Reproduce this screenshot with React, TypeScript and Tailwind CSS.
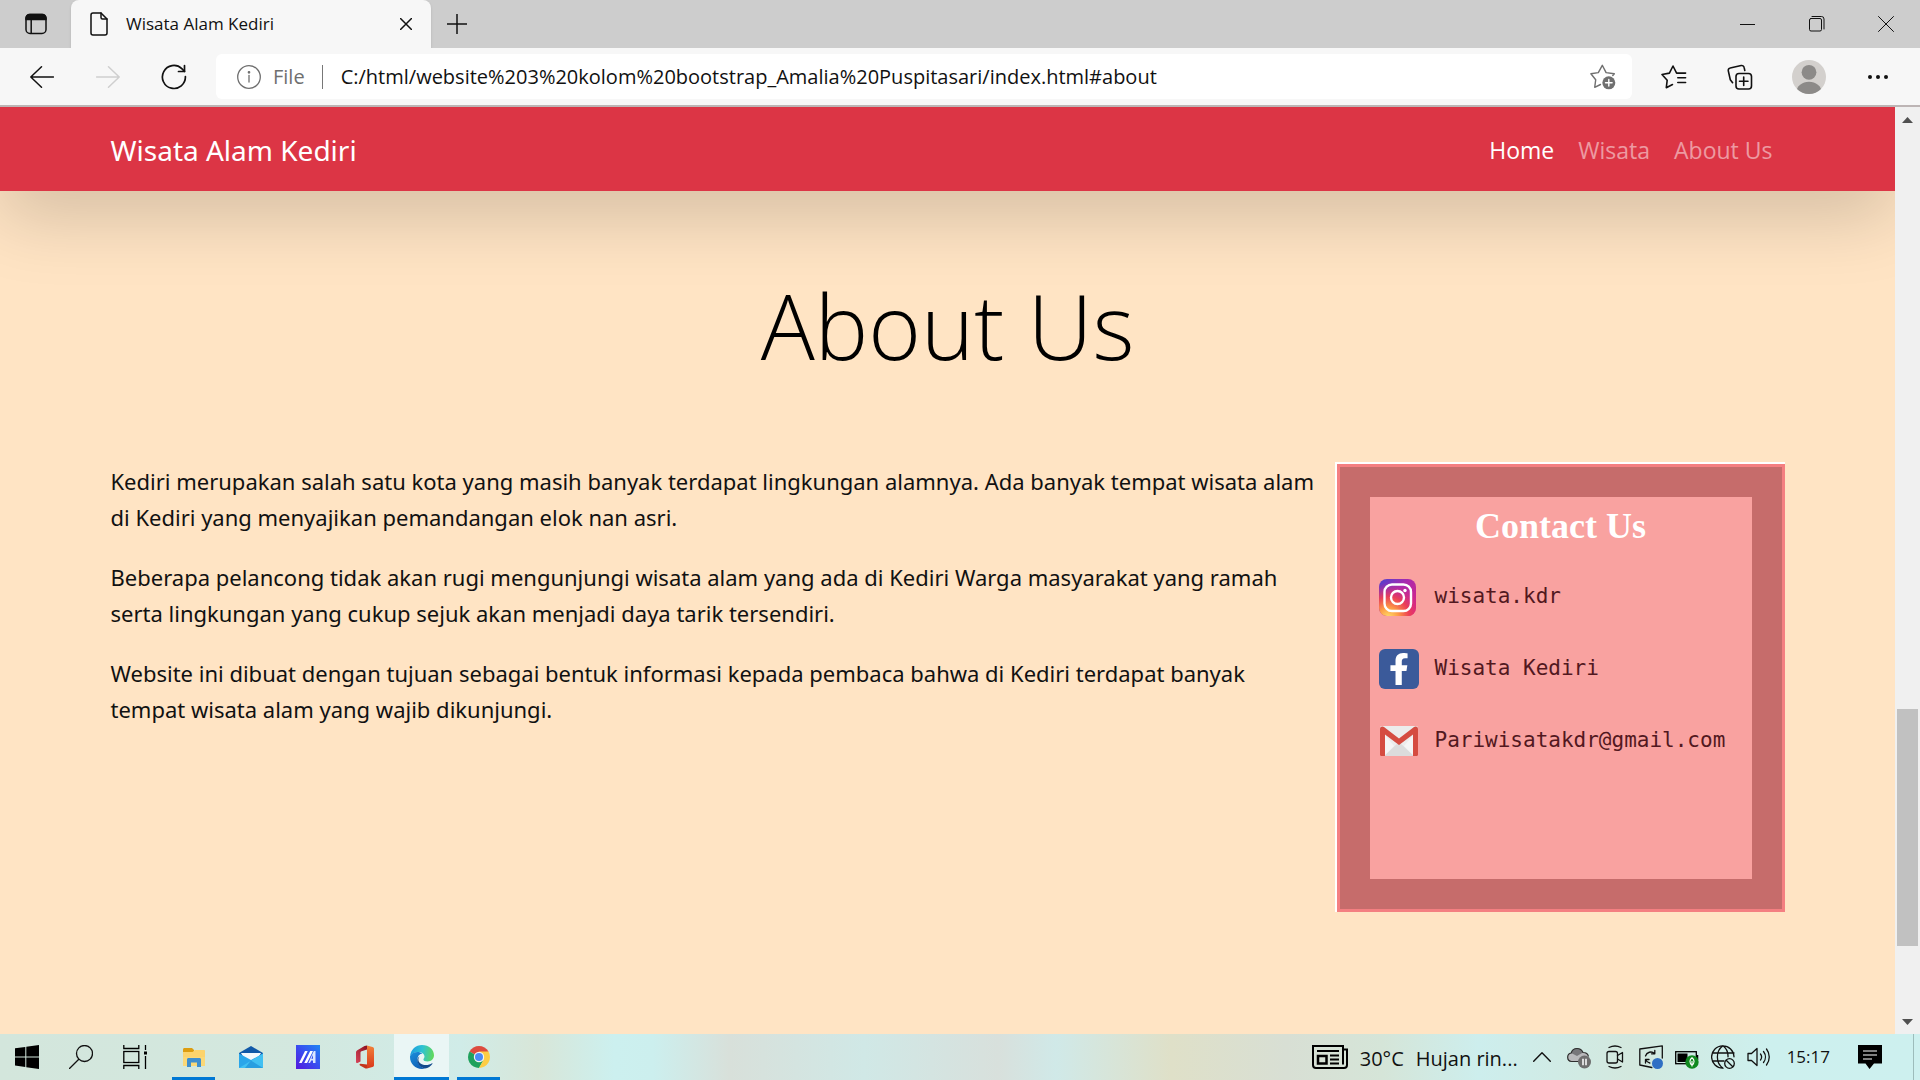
import React from "react";
import { FaFacebookF } from "react-icons/fa";

type Icon = { className?: string };

const line = {
  fill: "none",
  stroke: "currentColor",
  strokeLinecap: "round" as const,
  strokeLinejoin: "round" as const,
};

/* ---------- browser icons ---------- */

const TabActionsIcon = () => (
  <svg viewBox="0 0 24 24" className="size-6" {...line} strokeWidth="1.5">
    <rect x="2" y="2.5" width="20" height="19" rx="4" />
    <path d="M2 7.5V6a3.5 3.5 0 0 1 3.5-3.5h13A3.5 3.5 0 0 1 22 6v1.500Z" fill="currentColor" />
    <path d="M7.200 8v13" />
  </svg>
);

const PageIcon = () => (
  <svg viewBox="0 0 18 24" className="h-6 w-[18px] shrink-0" {...line} strokeWidth="1.5">
    <path d="M3 1h8l6 6v14a2 2 0 0 1-2 2H3a2 2 0 0 1-2-2V3a2 2 0 0 1 2-2Z" />
    <path d="M11 1v4.500A1.500 1.500 0 0 0 12.500 7H17" />
  </svg>
);

const CloseIcon = () => (
  <svg viewBox="0 0 12 12" className="size-3" {...line} strokeWidth="1.5">
    <path d="M.5.5l11 11M11.500.5l-11 11" />
  </svg>
);

const PlusIcon = () => (
  <svg viewBox="0 0 20 20" className="size-5" {...line} strokeWidth="1.500">
    <path d="M10 0v20M0 10h20" />
  </svg>
);

const MinimizeIcon = () => (
  <svg viewBox="0 0 15 15" className="size-[15px]" {...line} shapeRendering="crispEdges">
    <path d="M0 7.500h15" />
  </svg>
);

const RestoreIcon = () => (
  <svg viewBox="0 0 16 16" className="size-4" {...line}>
    <rect x=".5" y="2.500" width="12" height="12.500" rx="1.500" />
    <path d="M3 .5h9.500A2.500 2.500 0 0 1 15 3V13" />
  </svg>
);

const WindowCloseIcon = () => (
  <svg viewBox="0 0 16 16" className="size-4" {...line}>
    <path d="M.5.5l15 15M15.500.5l-15 15" />
  </svg>
);

const BackIcon = ({ className = "" }: Icon) => (
  <svg viewBox="0 0 24 22" className={`h-[22px] w-6 ${className}`} {...line} strokeWidth="1.500">
    <path d="M23.500 11H.8M11.500.8L.8 11l10.700 10.200" />
  </svg>
);

const ReloadIcon = () => (
  <svg viewBox="0 0 26 26" className="size-[26px]" {...line} strokeWidth="1.700">
    <path d="M24.400 12.500A11.500 11.500 0 1 1 20.800 4.600L23.500 7.300" />
    <path d="M23.500 1.500v6h-6" />
  </svg>
);

const InfoIcon = () => (
  <svg viewBox="0 0 24 24" className="size-6 shrink-0" {...line} strokeWidth="1.300">
    <circle cx="12" cy="12" r="11.300" />
    <path d="M12 10.500v6.500" />
    <circle cx="12" cy="7.300" r=".7" fill="currentColor" />
  </svg>
);

const AddFavoriteIcon = () => (
  <svg viewBox="0 0 26 26" className="size-[26px]" {...line} strokeWidth="1.400">
    <path d="M10.500 20.500l-5.800 2.800 1-7.500L.9 9.800l7.400-1.200 4-7.300 3.800 7.300 8.200 1.200-1.500 1.700" />
    <circle cx="18.800" cy="18.800" r="6.500" fill="#6f6f6f" stroke="none" />
    <path d="M18.800 15.500v6.600M15.500 18.800h6.600" stroke="#fff" />
  </svg>
);

const FavoritesIcon = () => (
  <svg viewBox="0 0 26 24" className="h-6 w-[26px]" {...line} strokeWidth="1.600">
    <path d="M11.500 19.500l-6.200 3.200.9-7.500L1 9.500l7.400-1.400L12 1l3.600 7.100h9M16.800 12.800h7.800M16.800 17.500h7.800" />
  </svg>
);

const CollectionsIcon = () => (
  <svg viewBox="0 0 26 26" className="size-[26px]" {...line} strokeWidth="1.600">
    <rect x="9" y="9.500" width="15.500" height="15.500" rx="3" />
    <path d="M16.700 13v8.500M12.500 17.200H21" />
    <path d="M17.800 6.500l-.7-3.100a2.400 2.400 0 0 0-2.900-1.900L3.200 4a2.400 2.400 0 0 0-1.900 2.900l2 8.800 2.300 3" />
  </svg>
);

const AvatarIcon = () => (
  <svg viewBox="0 0 34 34" className="size-[34px]">
    <clipPath id="avatar-clip">
      <circle cx="17" cy="17" r="17" />
    </clipPath>
    <g clipPath="url(#avatar-clip)">
      <rect width="34" height="34" fill="#d3d0cd" />
      <circle cx="17" cy="12.300" r="7.400" fill="#8c8a88" />
      <ellipse cx="17" cy="32" rx="12.500" ry="10.300" fill="#8c8a88" />
    </g>
  </svg>
);

const MoreIcon = () => (
  <svg viewBox="0 0 20 4" className="h-1 w-5" fill="currentColor">
    <circle cx="2" cy="2" r="2" />
    <circle cx="10" cy="2" r="2" />
    <circle cx="18" cy="2" r="2" />
  </svg>
);

/* ---------- contact icons ---------- */

const InstagramIcon = () => (
  <svg viewBox="0 0 37 37" className="size-[37px]">
    <defs>
      <linearGradient id="ig-base" x1="0" y1="0" x2="1" y2="1">
        <stop offset="0" stopColor="#4a41d0" />
        <stop offset=".4" stopColor="#a928ae" />
        <stop offset="1" stopColor="#e5277a" />
      </linearGradient>
      <radialGradient id="ig-warm" cx=".25" cy="1.050" r=".95">
        <stop offset="0" stopColor="#ffe06a" />
        <stop offset=".3" stopColor="#fd9a45" />
        <stop offset=".6" stopColor="#f0434e" stopOpacity=".9" />
        <stop offset="1" stopColor="#d62a86" stopOpacity="0" />
      </radialGradient>
    </defs>
    <rect width="37" height="37" rx="8" fill="url(#ig-base)" />
    <rect width="37" height="37" rx="8" fill="url(#ig-warm)" />
    <g fill="none" stroke="#fff" strokeWidth="2.400">
      <rect x="5.500" y="5.500" width="26.500" height="26.500" rx="7.500" />
      <circle cx="18.500" cy="18.500" r="6.500" />
    </g>
    <circle cx="26" cy="11.500" r="1.700" fill="#fff" />
  </svg>
);

const FacebookIcon = () => (
  <span className="flex size-10 items-center justify-center rounded-md bg-[#3b5a9a] text-white">
    <FaFacebookF className="size-8" />
  </span>
);

const GmailIcon = () => (
  <svg viewBox="0 0 40 30" className="h-[30px] w-10">
    <rect x="1" y="0" width="38" height="30" rx="2" fill="#ececec" />
    <path d="M5 30L20 16l15 14Z" fill="#dcdcdc" />
    <path d="M5 8v22l10-10ZM35 8v22L25 20Z" fill="#f5f5f5" />
    <path
      d="M1 3C1 0 4 0 5 1l15 11.500L35 1c1-1 4-1 4 2v25.500c0 1-.7 1.500-1.500 1.500H34V8.500L20 19 6 8.500V30H2.500C1.700 30 1 29.500 1 28.500Z"
      fill="#d54c41"
    />
  </svg>
);

/* ---------- taskbar icons ---------- */

const WindowsIcon = () => (
  <svg viewBox="0 0 24 24" className="size-6" fill="#000">
    <path d="M0 3.300L10.300 2v9.500H0ZM11.300 1.800L24 0v11.500H11.300ZM0 12.500h10.300V22L0 20.600ZM11.300 12.500H24V24l-12.700-1.800Z" />
  </svg>
);

const SearchIcon = () => (
  <svg viewBox="0 0 24 24" className="size-6" {...line} strokeWidth="1.300">
    <circle cx="15.500" cy="8.500" r="8" />
    <path d="M9.800 14.200L.5 23.500" />
  </svg>
);

const TaskViewIcon = () => (
  <svg viewBox="0 0 24 24" className="size-6" fill="none" stroke="#000" strokeWidth="1.300">
    <rect x=".8" y="6.500" width="15" height="11" />
    <path d="M.8 0v3.500h15V0M.8 24v-3.500h15V24M22.500 0v5M22.500 11v13" />
    <path d="M21 6.500h3v3h-3Z" fill="#000" stroke="none" />
  </svg>
);

const ExplorerIcon = () => (
  <svg viewBox="0 0 24 24" className="size-6">
    <path d="M1 4.500C1 3.600 1.600 3 2.500 3H10l2 2v2H1Z" fill="#dd9d10" />
    <path d="M1 7h9.500L13 5h9c.6 0 1 .4 1 1v15H1Z" fill="#fcd36c" />
    <path d="M1 12h22v9H1Z" fill="#fbd877" />
    <path d="M5 22v-7.500c0-.8.600-1.500 1.500-1.500h11c.9 0 1.500.7 1.500 1.500V22h-4v-4.500H9V22Z" fill="#3f8fce" />
  </svg>
);

const MailIcon = () => (
  <svg viewBox="0 0 24 24" className="size-6">
    <path d="M0 8l12-7 12 7v4H0Z" fill="#1159a8" />
    <path d="M2 8h20l-5 9H7Z" fill="#f4f9fd" />
    <path d="M0 8.500L12 15l12-6.500V23H0Z" fill="#2aa6ea" />
    <path d="M24 8.500L0 23h24Z" fill="#41c0f2" />
    <path d="M12 15.500L24 23H6Z" fill="#1787d4" opacity=".6" />
  </svg>
);

const MyAsusIcon = () => (
  <svg viewBox="0 0 24 24" className="size-6">
    <defs>
      <linearGradient id="asus" x1="1" y1="0" x2="0" y2="1">
        <stop offset="0" stopColor="#1f86f3" />
        <stop offset=".5" stopColor="#3a4cf0" />
        <stop offset="1" stopColor="#5518dd" />
      </linearGradient>
    </defs>
    <rect width="24" height="24" fill="url(#asus)" />
    <path d="M3 18L9 6h2.700l-6 12ZM8.200 18l6-12H17l-6 12Z" fill="#fff" />
    <path d="M12.300 18l5.500-12h1.700v12H17v-2.500h-1.800L14 18ZM17 10l-1.700 3.800H17Z" fill="#dce7ff" />
  </svg>
);

const OfficeIcon = () => (
  <svg viewBox="0 0 24 24" className="size-6">
    <defs>
      <linearGradient id="office-side" x1="0" y1="0" x2="0" y2="1">
        <stop offset="0" stopColor="#f2823a" />
        <stop offset="1" stopColor="#d9361a" />
      </linearGradient>
      <linearGradient id="office-left" x1="1" y1="0" x2="0" y2="1">
        <stop offset="0" stopColor="#8a1020" />
        <stop offset="1" stopColor="#d8455a" />
      </linearGradient>
    </defs>
    <path d="M14 .5L19.500 2C20.500 2.300 21 3 21 4v16c0 1-.5 1.700-1.500 2L14 23.500Z" fill="url(#office-side)" />
    <path d="M14 .5v4L8.500 6.200C7.800 6.500 7.500 7 7.500 7.600v8.900L4.500 18C3.500 18.300 3 18 3 17V7.500c0-1 .5-1.800 1.300-2.300L11.500 1Z" fill="url(#office-left)" />
    <path d="M7.500 18.800L14 19.500v4h-1.500l-5.500-3c-.8-.5-.5-1.700.5-1.700Z" fill="#c2341c" />
  </svg>
);

const EdgeIcon = () => (
  <svg viewBox="0 0 24 24" className="size-6">
    <defs>
      <linearGradient id="edge-top" x1="0" y1=".4" x2="1" y2=".5">
        <stop offset="0" stopColor="#1c9de0" />
        <stop offset=".5" stopColor="#2fc3d2" />
        <stop offset="1" stopColor="#62d957" />
      </linearGradient>
      <linearGradient id="edge-body" x1="0" y1="0" x2=".6" y2="1">
        <stop offset="0" stopColor="#1b90dc" />
        <stop offset="1" stopColor="#0f5fb5" />
      </linearGradient>
    </defs>
    <path
      d="M.1 11C.8 4.600 5.800 0 12 0c7 0 12 4.700 12 10.300 0 3.700-2.800 6.200-6.300 6.200-2.900 0-4.300-1-4.300-2 0-.8 1.100-1.200 1.100-3 0-2.500-2.700-4.600-6.300-4.600C4.500 6.900 1.400 8.600.1 11Z"
      fill="url(#edge-top)"
    />
    <path d="M.1 11c1.300-2.700 4.200-4.100 7.400-4.100 2 0 3.700.6 5 1.600-3 .2-5 2.800-5 6 0 4.300 3.200 8 7.500 9.100-1 .3-2 .4-3 .4C5.400 24 0 18.700 0 12Z" fill="url(#edge-body)" />
    <path d="M9.600 11.500c-.9 1-1.300 2.200-1.200 3.600.4 3.500 3.900 5 7.300 5 2.700 0 4.800-.9 6.300-1.800.4-.2.700.1.500.5A12 12 0 0 1 15 23.600C10 22.500 7 18.500 7.500 14.500c.2-1.400.9-2.500 2.100-3Z" fill="#134a8c" />
  </svg>
);

const ChromeIcon = () => (
  <svg viewBox="0 0 24 24" className="size-6">
    <path d="M12 12L2.500 6.500A11 11 0 0 1 21.500 6.500Z" fill="#dd4b3e" />
    <path d="M12 12L2.500 6.500A11 11 0 0 0 12 23l4-7Z" fill="#1fa15d" />
    <path d="M12 6.500h9.500A11 11 0 0 1 12 23l5-9Z" fill="#fdcd45" />
    <circle cx="12" cy="12" r="5.200" fill="#f4f4f4" />
    <circle cx="12" cy="12" r="4" fill="#4b8bf5" />
  </svg>
);

const NewsIcon = () => (
  <svg viewBox="0 0 36 24" className="h-6 w-9" fill="none" stroke="#000" strokeWidth="2">
    <path d="M31 4.500h4V20a3 3 0 0 1-3 3H4a3 3 0 0 1-3-3V1h30v18.500" />
    <path d="M5 6h22M18 10.500h9M18 14.500h9M18 18.500h9" />
    <rect x="6" y="11" width="8.500" height="7.500" strokeWidth="2.500" />
  </svg>
);

const ChevronIcon = () => (
  <svg viewBox="0 0 18 10" className="h-[10px] w-[18px]" {...line} strokeWidth="1.400">
    <path d="M.7 9.300L9 .8l8.300 8.500" />
  </svg>
);

const CloudIcon = () => (
  <svg viewBox="0 0 24 24" className="size-6">
    <path d="M4.500 16.500a4.300 4.300 0 0 1-.3-8.500C5 5 7 3.500 10 3.500c3 0 5 1.500 6 4 3 0 5 1.500 5.500 4v5Z" fill="#b9b9bb" />
    <path d="M4.200 8C5 5 7 3.500 10 3.500c3 0 5 1.500 6 4l-6 3.500Z" fill="#77777a" />
    <path d="M4.500 16.500a4.300 4.300 0 0 1-.3-8.500C5 5 7 3.500 10 3.500c3 0 5 1.500 6 4 3 0 5 1.500 5.500 4M4.500 16.500H12" fill="none" stroke="#2e2e2e" strokeWidth="1.200" />
    <circle cx="17.500" cy="17" r="6.500" fill="#6e6e6e" />
    <path d="M16 13.800v6.500M19 13.800v6.500" stroke="#fff" strokeWidth="1.500" />
  </svg>
);

const CameraIcon = () => (
  <svg viewBox="0 0 24 24" className="size-6" {...line} strokeWidth="1.300">
    <rect x="4" y="6.500" width="10.500" height="11.500" rx="2" />
    <path d="M14.500 10.500l5-3v9.500l-5-3M6 2.500c4-2 8-2 12 0M6 21.500c4 2 8 2 12 0" />
  </svg>
);

const UpdateIcon = () => (
  <svg viewBox="0 0 24 24" className="size-6" {...line} strokeWidth="1.300">
    <path d="M23.300 13V.8L.8 4v16l12 2.500" />
    <path d="M6.500 11a5.500 5.500 0 0 1 9-2.500M15.800 5.500v3.300h-3.300M6.500 18v-3.500H10M6.800 15a6 6 0 0 0 4 3" />
    <circle cx="18.500" cy="18.500" r="5.500" fill="#2f6fc4" stroke="none" />
  </svg>
);

const BatteryIcon = () => (
  <svg viewBox="0 0 24 24" className="size-6">
    <rect x=".7" y="6.700" width="20.600" height="12" fill="none" stroke="#000" strokeWidth="1.300" />
    <rect x="2.500" y="8.500" width="10" height="8.500" fill="#000" />
    <path d="M22.500 10v5" stroke="#000" strokeWidth="1.500" />
    <circle cx="17" cy="17" r="6.700" fill="#10891f" />
    <path d="M17 12.800c2.500 2 3 5 0 7.500-3-2.500-2.500-5.500 0-7.500ZM17 16v5.500" fill="none" stroke="#fff" strokeWidth="1.100" />
  </svg>
);

const GlobeIcon = () => (
  <svg viewBox="0 0 24 24" className="size-6" {...line} strokeWidth="1.300">
    <path d="M23 11.800A11.200 11.200 0 1 0 12 23.200M23 8H1.800M1.800 16H13M12 .8C4.500 6 4.500 18 12 23.200M12 .8c4 3 5.200 7 5 11" />
    <circle cx="18.500" cy="18.500" r="4.800" />
    <path d="M15.200 15.200l6.600 6.600" />
  </svg>
);

const SpeakerIcon = () => (
  <svg viewBox="0 0 24 24" className="size-6" {...line} strokeWidth="1.300">
    <path d="M1 8.500h3.500L10 3.500v17l-5.500-5H1ZM13.500 9a5 5 0 0 1 0 6M16.500 6.500a9 9 0 0 1 0 11M19.500 4a13 13 0 0 1 0 16" />
  </svg>
);

const NotificationIcon = () => (
  <svg viewBox="0 0 24 24" className="size-6">
    <path d="M0 0h24v18.500h-8L11.500 24 7.500 18.500H0Z" fill="#000" />
    <path d="M5 6h14M5 10h14M5 14h9" stroke="#fff" strokeWidth="1.200" />
  </svg>
);

/* ---------- sections ---------- */

function TabStrip() {
  return (
    <div className="flex h-12 items-stretch bg-[#cdcdcd]">
      <button type="button" aria-label="Tab actions" className="flex w-[71px] items-center justify-center">
        <TabActionsIcon />
      </button>
      <div className="flex w-[360px] items-center rounded-t-lg bg-[#f7f7f7] pr-4 pl-[19px] shadow-sm">
        <PageIcon />
        <span className="ml-[18px] flex-1 text-[17px] leading-6">Wisata Alam Kediri</span>
        <button type="button" aria-label="Close tab" className="flex size-[18px] items-center justify-center">
          <CloseIcon />
        </button>
      </div>
      <button type="button" aria-label="New tab" className="flex w-[52px] items-center justify-center">
        <PlusIcon />
      </button>
      <div className="ml-auto flex">
        <button type="button" aria-label="Minimize" className="flex w-[69px] items-center justify-center">
          <MinimizeIcon />
        </button>
        <button type="button" aria-label="Restore" className="flex w-[69px] items-center justify-center">
          <RestoreIcon />
        </button>
        <button type="button" aria-label="Close window" className="flex w-[69px] items-center justify-center">
          <WindowCloseIcon />
        </button>
      </div>
    </div>
  );
}

function Toolbar() {
  const tool = "flex h-10 w-[66px] items-center justify-center";
  return (
    <div className="flex items-center border-b-2 border-[#bdb5b5] bg-[#f7f7f7] px-[9px] py-1.5">
      <button type="button" aria-label="Back" className={tool}>
        <BackIcon />
      </button>
      <button type="button" aria-label="Forward" className={tool}>
        <BackIcon className="rotate-180 text-[#cfcfcf]" />
      </button>
      <button type="button" aria-label="Reload" className={tool}>
        <ReloadIcon />
      </button>
      <div className="mx-[9px] flex h-[45px] flex-1 items-center rounded-md bg-white pr-4 pl-[21px] text-[20px] text-[#6f6f6f]">
        <InfoIcon />
        <label htmlFor="address" className="ml-3">
          File
        </label>
        <span className="mr-[18px] ml-[17px] h-6 w-px bg-[#777]" />
        <input
          id="address"
          type="text"
          defaultValue="C:/html/website%203%20kolom%20bootstrap_Amalia%20Puspitasari/index.html#about"
          className="min-w-0 flex-1 bg-transparent text-[#111] outline-none"
        />
        <button type="button" aria-label="Add to favorites">
          <AddFavoriteIcon />
        </button>
      </div>
      <button type="button" aria-label="Favorites" className={tool}>
        <FavoritesIcon />
      </button>
      <button type="button" aria-label="Collections" className={tool}>
        <CollectionsIcon />
      </button>
      <button type="button" aria-label="Profile" className="flex h-10 w-[72px] items-center justify-center">
        <AvatarIcon />
      </button>
      <button type="button" aria-label="More" className={tool}>
        <MoreIcon />
      </button>
    </div>
  );
}

function SiteNav() {
  return (
    <nav className="flex h-[84px] items-center bg-[#dc3545] pt-0.5 shadow-[0_24px_72px_rgba(0,0,0,0.175)]">
      <div className="mx-auto flex w-full max-w-[1710px] items-center px-[18px]">
        <a href="#top" className="font-['Noto_Sans',sans-serif] text-[28px] leading-[45px] text-white">
          Wisata Alam Kediri
        </a>
        <div className="ml-auto flex gap-6 pr-3 text-[23px] leading-9 text-white/50">
          <a href="#home" className="text-white">
            Home
          </a>
          <a href="#wisata">Wisata</a>
          <a href="#about">About Us</a>
        </div>
      </div>
    </nav>
  );
}

const paragraphs = [
  [
    "Kediri merupakan salah satu kota yang masih banyak terdapat lingkungan alamnya. Ada banyak tempat wisata alam",
    "di Kediri yang menyajikan pemandangan elok nan asri.",
  ],
  [
    "Beberapa pelancong tidak akan rugi mengunjungi wisata alam yang ada di Kediri Warga masyarakat yang ramah",
    "serta lingkungan yang cukup sejuk akan menjadi daya tarik tersendiri.",
  ],
  [
    "Website ini dibuat dengan tujuan sebagai bentuk informasi kepada pembaca bahwa di Kediri terdapat banyak",
    "tempat wisata alam yang wajib dikunjungi.",
  ],
];

const contacts = [
  { icon: <InstagramIcon />, text: "wisata.kdr" },
  { icon: <FacebookIcon />, text: "Wisata Kediri" },
  { icon: <GmailIcon />, text: "Pariwisatakdr@gmail.com" },
];

function ContactCard() {
  return (
    <aside className="h-[450px] w-[450px] shrink-0 border-t-2 border-l-2 border-white">
      <div className="h-full border-[3px] border-[#f47f81] bg-[#c66c6b] p-[30px]">
        <div className="h-full bg-[#f9a2a0] pt-1.5 pl-[9px] font-['DejaVu_Sans_Mono',monospace] text-[21px] text-[#521820]">
          <h2 className="pr-[9px] text-center font-['Liberation_Serif',serif] text-[36px] leading-[46px] font-bold text-white">
            Contact Us
          </h2>
          <ul className="mt-3">
            {contacts.map((c) => (
              <li key={c.text} className="flex h-[72px] items-center">
                <span className="w-14 shrink-0">{c.icon}</span>
                {c.text}
              </li>
            ))}
          </ul>
        </div>
      </div>
    </aside>
  );
}

function Scrollbar() {
  return (
    <div className="flex w-[25px] flex-col items-center bg-[#f0f0f0]">
      <button type="button" aria-label="Scroll up" className="flex h-[25px] items-center justify-center">
        <svg viewBox="0 0 11 6" className="h-1.5 w-[11px]" fill="#505050">
          <path d="M5.500 0L11 6H0Z" />
        </svg>
      </button>
      <div className="grow-[577]" />
      <div className="w-[21px] grow-[237] bg-[#c1c1c1]" />
      <div className="grow-[63]" />
      <button type="button" aria-label="Scroll down" className="flex h-[25px] items-center justify-center">
        <svg viewBox="0 0 11 6" className="h-1.5 w-[11px]" fill="#505050">
          <path d="M5.500 6L11 0H0Z" />
        </svg>
      </button>
    </div>
  );
}

function Page() {
  return (
    <div className="flex flex-1">
      <div className="min-w-0 flex-1 overflow-hidden bg-[#ffe4c4]">
        <SiteNav />
        <main id="about" className="mx-auto max-w-[1710px] px-[18px] pt-[76px]">
          <h1 className="text-center text-[90px] leading-[116px] font-light text-black">About Us</h1>
          <div className="mt-[79px] flex">
            <div className="flex min-w-0 flex-1 flex-col gap-6 pt-px font-['Noto_Sans',sans-serif] text-[22px] leading-9 whitespace-nowrap">
              {paragraphs.map(([first, second]) => (
                <p key={second}>
                  {first}
                  <br />
                  {second}
                </p>
              ))}
            </div>
            <ContactCard />
          </div>
        </main>
      </div>
      <Scrollbar />
    </div>
  );
}

const apps = [
  { name: "File Explorer", icon: <ExplorerIcon />, open: true },
  { name: "Mail", icon: <MailIcon /> },
  { name: "MyASUS", icon: <MyAsusIcon /> },
  { name: "Office", icon: <OfficeIcon /> },
  { name: "Edge", icon: <EdgeIcon />, active: true },
  { name: "Chrome", icon: <ChromeIcon />, open: true },
];

const tray = [
  { name: "OneDrive", icon: <CloudIcon /> },
  { name: "Meet now", icon: <CameraIcon /> },
  { name: "Update", icon: <UpdateIcon /> },
  { name: "Battery", icon: <BatteryIcon /> },
  { name: "Network", icon: <GlobeIcon /> },
  { name: "Volume", icon: <SpeakerIcon /> },
];

function Taskbar() {
  const system = "flex w-[54px] items-center justify-center";
  return (
    <footer className="flex h-[46px] items-stretch bg-[linear-gradient(90deg,#d3e6dc_0%,#d3e8df_16%,#d0ece8_24%,#d8e6d8_28%,#ccf0ef_32%,#ccefee_34%,#d8e0da_38%,#d0e8e6_45%,#d8e0dc_52%,#d0e9e8_55%,#dfe0c8_61%,#d8dfd4_67%,#d5e5d8_72%,#cdeeed_77%,#d3e8de_85%,#cdf0ee_92%,#cdf0ef_100%)]">
      <button type="button" aria-label="Start" className={system}>
        <WindowsIcon />
      </button>
      <button type="button" aria-label="Search" className={system}>
        <SearchIcon />
      </button>
      <button type="button" aria-label="Task view" className={system}>
        <TaskViewIcon />
      </button>
      <div className="ml-[3px] flex">
        {apps.map((app) => (
          <button
            key={app.name}
            type="button"
            aria-label={app.name}
            className={`flex flex-col items-center pt-[11px] ${app.active ? "mx-px w-[55px] bg-[#eaf6f5]" : "w-[57px]"}`}
          >
            {app.icon}
            {(app.open || app.active) && (
              <span className={`mt-auto h-[3px] bg-[#0078d4] ${app.active ? "w-full" : "w-[43px]"}`} />
            )}
          </button>
        ))}
      </div>
      <div className="ml-auto flex items-center">
        <button type="button" className="flex items-center text-[20px] whitespace-nowrap">
          <NewsIcon />
          <span className="mt-1 ml-3">30°C</span>
          <span className="mt-1 ml-3">Hujan rin...</span>
        </button>
        <button type="button" aria-label="Show hidden icons" className="mr-4 ml-[15px]">
          <ChevronIcon />
        </button>
        <div className="flex gap-3">
          {tray.map((t) => (
            <button key={t.name} type="button" aria-label={t.name}>
              {t.icon}
            </button>
          ))}
        </div>
        <time className="ml-4 text-[17px]">15:17</time>
        <button type="button" aria-label="Notifications" className="mr-[31px] ml-7">
          <NotificationIcon />
        </button>
        <div className="h-full w-[7px] border-l border-[#9dbcbb]" />
      </div>
    </footer>
  );
}

export default function App() {
  return (
    <div className="flex min-h-screen flex-col font-['Open_Sans','Noto_Sans',sans-serif] text-[#111]">
      <TabStrip />
      <Toolbar />
      <Page />
      <Taskbar />
    </div>
  );
}
